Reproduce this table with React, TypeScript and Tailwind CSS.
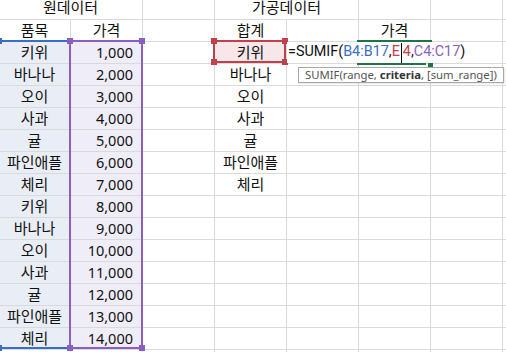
import React from 'react';

const ITEMS = ['키위', '바나나', '오이', '사과', '귤', '파인애플', '체리'];
const DATA = [...ITEMS, ...ITEMS].map((name, i) => ({
  name,
  price: ((i + 1) * 1000).toLocaleString('en-US'),
}));

const cell = 'border-r border-b border-[#dadada] flex items-center whitespace-nowrap';

// Excel style reference range: coloured frame with a handle on each corner
function RangeBox({ className, frame, handle }: { className: string; frame: string; handle: string }) {
  const sq = `absolute w-[6px] h-[6px] ${handle}`;
  return (
    <div className={`absolute border-2 ${frame} ${className}`}>
      <div className={`${sq} -left-[4px] -top-[4px]`} />
      <div className={`${sq} -right-[4px] -top-[4px]`} />
      <div className={`${sq} -left-[4px] -bottom-[4px]`} />
      <div className={`${sq} -right-[4px] -bottom-[4px]`} />
    </div>
  );
}

export default function App() {
  const rows: React.ReactNode[] = [];

  rows.push(
    <React.Fragment key="r1">
      <div className={`${cell} col-span-2 justify-center pb-[3px]`}>원데이터</div>
      <div className={cell} />
      <div className={`${cell} col-span-2 justify-center pb-[3px]`}>가공데이터</div>
      <div className={cell} />
      <div className={cell} />
      <div className={cell} />
    </React.Fragment>
  );

  rows.push(
    <React.Fragment key="r2">
      <div className={`${cell} justify-center`}>품목</div>
      <div className={`${cell} justify-center`}>가격</div>
      <div className={cell} />
      <div className={`${cell} justify-center`}>합계</div>
      <div className={cell} />
      <div className={`${cell} justify-center`}>가격</div>
      <div className={cell} />
      <div className={cell} />
    </React.Fragment>
  );

  DATA.forEach((d, i) => {
    rows.push(
      <React.Fragment key={`d${i}`}>
        <div className={`${cell} justify-center bg-[#e9eef6]`}>{d.name}</div>
        <div className={`${cell} justify-end pr-[9px] bg-[#efedf7] font-['Noto_Sans'] text-[14.5px]`}>{d.price}</div>
        <div className={cell} />
        <div className={`${cell} justify-center ${i === 0 ? 'bg-[#f7e7e8]' : ''}`}>{i < 7 ? ITEMS[i] : ''}</div>
        <div className={cell} />
        <div className={cell} />
        <div className={cell} />
        <div className={cell} />
      </React.Fragment>
    );
  });

  rows.push(
    <React.Fragment key="last">
      {Array.from({ length: 8 }).map((_, i) => (
        <div key={i} className={cell} />
      ))}
    </React.Fragment>
  );

  return (
    <div className="relative w-[506px] h-[352px] overflow-hidden bg-white text-[#111] font-['Noto_Sans','Noto_Sans_CJK_KR',sans-serif] text-[15px] leading-none">
      <div className="-ml-px -mt-[2px] grid grid-cols-[repeat(8,72px)] auto-rows-[22px]">
        {rows}
      </div>

      {/* reference ranges */}
      <RangeBox className="left-[-2px] top-[40px] w-[73px] h-[309px]" frame="border-[#3a6ec3]" handle="bg-[#3a6ec3]" />
      <RangeBox className="left-[69px] top-[40px] w-[74px] h-[309px]" frame="border-[#8a5fc0]" handle="bg-[#8a5fc0]" />
      <RangeBox className="left-[213px] top-[40px] w-[73px] h-[23px]" frame="border-[#c0404b]" handle="bg-[#c0404b]" />

      {/* active cell edge */}
      <div className="absolute left-[357px] top-[40px] w-[75px] h-[2px] bg-[#217346]" />
      <div className="absolute left-[357px] top-[63px] w-[69px] h-[2px] bg-[#217346]" />
      <div className="absolute left-[428px] top-[62px] w-[5px] h-[5px] bg-[#217346]" />

      {/* formula being edited */}
      <div className="absolute left-[287px] top-[42px] h-[21px] pl-px pr-[2px] bg-white flex items-center whitespace-nowrap font-['Roboto'] text-[14.4px] text-[#111]">
        <span>=SUMIF(</span>
        <span className="text-[#3a6ec3]">B4:B17</span>
        <span>,</span>
        <span className="text-[#c0404b]">E</span>
        <span className="w-px h-[20px] bg-black mx-px" />
        <span className="text-[#c0404b]">4</span>
        <span>,</span>
        <span className="text-[#8a5fc0]">C4:C17</span>
        <span>)</span>
      </div>

      {/* function tooltip */}
      <div className="absolute left-[298px] top-[67px] w-[206px] h-[16px] bg-white border border-[#a8a8a8] shadow-[1px_1px_1px_rgba(0,0,0,0.08)] flex items-center pl-[6px] whitespace-nowrap font-['Noto_Sans'] text-[11.3px] text-[#555]">
        SUMIF(range,&nbsp;<b className="font-bold text-[#333]">criteria</b>, [sum_range])
      </div>
    </div>
  );
}
